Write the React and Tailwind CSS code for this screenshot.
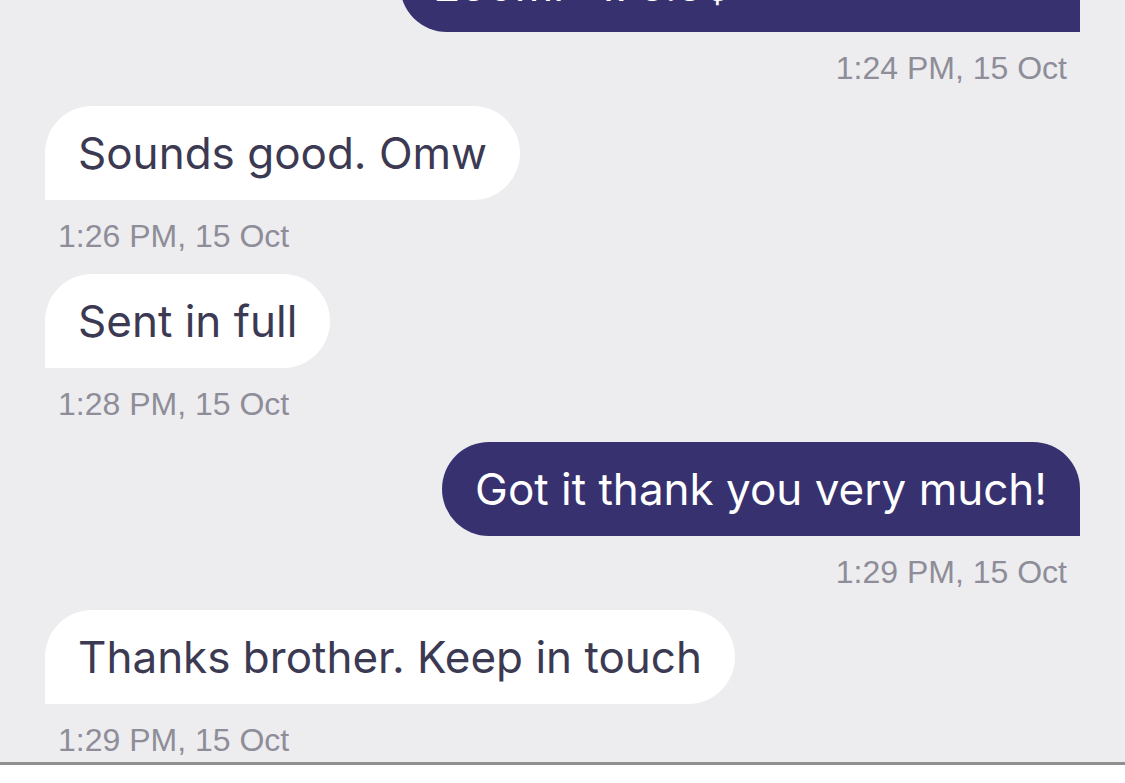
export default function App() {
  const msgs = [
    { me: true, lines: ["Large bottle (750ml) - 320.0$", "250ml- 175.5$"], time: "1:24 PM, 15 Oct" },
    { me: false, lines: ["Sounds good. Omw"], time: "1:26 PM, 15 Oct" },
    { me: false, lines: ["Sent in full"], time: "1:28 PM, 15 Oct" },
    { me: true, lines: ["Got it thank you very much!"], time: "1:29 PM, 15 Oct" },
    { me: false, lines: ["Thanks brother. Keep in touch"], time: "1:29 PM, 15 Oct" },
  ];
  return (
    <div className="h-[783px] w-[1125px] flex flex-col bg-[#ededef] overflow-hidden">
      <div className="flex-1 min-h-0 overflow-hidden flex flex-col justify-end gap-[18px] px-[45px] pb-[2px]">
        {msgs.map((m, i) => (
          <div key={i} className={m.me ? "flex flex-col items-end shrink-0" : "flex flex-col items-start shrink-0"}>
            <div
              className={
                m.me
                  ? "bg-[#373170] text-white rounded-t-[47px] rounded-bl-[47px] rounded-br-none px-[33px] py-[21px] text-[44px] leading-[52px]"
                  : "bg-white text-[#3b3a52] rounded-t-[47px] rounded-br-[47px] rounded-bl-none px-[33px] py-[21px] text-[44px] leading-[52px]"
              }
              style={{ fontFamily: "Inter, 'Noto Sans', sans-serif" }}
            >
              {m.lines.map((l, j) => (
                <div key={j} className="whitespace-nowrap">{l}</div>
              ))}
            </div>
            <div
              className={m.me ? "mt-4 mr-[13px] text-[32px] leading-[40px] text-[#8e8d99]" : "mt-4 ml-[13px] text-[32px] leading-[40px] text-[#8e8d99]"}
              style={{ fontFamily: "'Liberation Sans', Arial, sans-serif" }}
            >
              {m.time}
            </div>
          </div>
        ))}
      </div>
      <div className="h-[21px] shrink-0 bg-white border-t-[3px] border-[#8f8f8f]"></div>
    </div>
  );
}
